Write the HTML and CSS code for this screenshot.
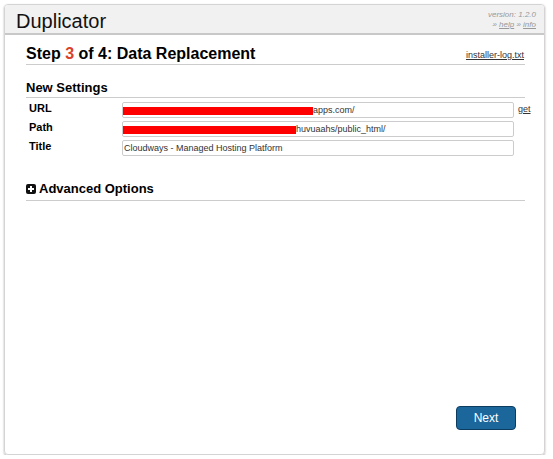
FILE: index.html
```html
<!DOCTYPE html>
<html>
<head>
<meta charset="utf-8">
<link rel="stylesheet" href="styles.css">
</head>
<body>
<div class="box">
  <div class="header">
    <div class="brand">Duplicator</div>
    <div class="version">
      <div>version: 1.2.0</div>
      <div>&raquo; <a href="#">help</a> &raquo; <a href="#">info</a></div>
    </div>
  </div>
  <div class="content">
    <div class="step">
      <div class="step-title">Step <span class="num">3</span> of 4: Data Replacement</div>
      <a class="log" href="#">installer-log.txt</a>
    </div>
    <div class="section">New Settings</div>
    <div class="rows">
      <div class="row">
        <div class="label">URL</div>
        <div class="input"><span class="redact" style="width:190px"></span>apps.com/</div>
        <a class="get" href="#">get</a>
      </div>
      <div class="row">
        <div class="label">Path</div>
        <div class="input"><span class="redact" style="width:173px"></span>huvuaahs/public_html/</div>
      </div>
      <div class="row">
        <div class="label">Title</div>
        <div class="input">Cloudways - Managed Hosting Platform</div>
      </div>
    </div>
    <div class="advanced">
      <span class="plus"><svg width="10" height="10" viewBox="0 0 10 10"><rect x="0" y="0" width="10" height="10" rx="2" fill="#111"/><path d="M5 2v6M2 5h6" stroke="#fff" stroke-width="2"/></svg></span>
      Advanced Options
    </div>
    <div class="spacer"></div>
    <div class="footer">
      <button class="next">Next</button>
    </div>
  </div>
</div>
</body>
</html>
```
FILE: styles.css
```css
html, body {
  margin: 0;
  padding: 0;
  background: #fff;
  font-family: "Liberation Sans", Arial, sans-serif;
  color: #000;
}
.box {
  margin: 4px 0 0 4px;
  width: 539px;
  height: 449px;
  border: 1px solid #d4d4d4;
  border-radius: 4px;
  box-shadow: 0 1px 2px #aaa;
  display: flex;
  flex-direction: column;
  overflow: hidden;
}
.header {
  background: #f1f1f1;
  height: 28px;
  border-bottom: 2px solid #c8c8c8;
  display: flex;
  justify-content: space-between;
  align-items: flex-start;
}
.brand {
  font-size: 20px;
  padding: 4px 0 0 11px;
  line-height: 24px;
  color: #111;
}
.version {
  font-size: 8px;
  font-style: italic;
  color: #999;
  text-align: right;
  padding: 5px 8px 0 0;
  line-height: 10px;
}
.version a { color: #999; }
.content {
  flex: 1;
  padding: 9px 19px 24px 21px;
  display: flex;
  flex-direction: column;
}
.step {
  display: flex;
  justify-content: space-between;
  align-items: flex-end;
  border-bottom: 1px solid #ccc;
  padding-bottom: 1px;
}
.step-title {
  font-size: 16px;
  font-weight: bold;
  line-height: 19px;
}
.num { color: #d9412a; }
.log {
  font-size: 9px;
  color: #333;
  padding-bottom: 3px;
  margin-right: 1px;
}
.section {
  margin-top: 14px;
  font-size: 13px;
  font-weight: bold;
  line-height: 17px;
  border-bottom: 1px solid #ccc;
  padding-bottom: 1px;
}
.rows {
  margin-top: 4px;
  display: flex;
  flex-direction: column;
  gap: 3px;
}
.row {
  display: flex;
  align-items: center;
  height: 16px;
}
.label {
  width: 93px;
  flex-shrink: 0;
  padding-left: 3px;
  font-size: 11px;
  font-weight: bold;
  margin-top: -4px;
}
.input {
  width: 389px;
  flex-shrink: 0;
  height: 14px;
  border: 1px solid #ccc;
  border-radius: 2px;
  font-size: 9px;
  line-height: 14px;
  color: #333;
  display: flex;
  align-items: center;
  padding-left: 1px;
  white-space: nowrap;
  overflow: hidden;
}
.redact {
  display: inline-block;
  flex-shrink: 0;
  height: 8px;
  background: #ff0000;
  margin-left: -1px;
  margin-top: 1px;
}
.get {
  font-size: 9px;
  color: #333;
  margin-left: 4px;
  margin-top: -2px;
}
.advanced {
  margin-top: 24px;
  font-size: 13px;
  font-weight: bold;
  line-height: 17px;
  border-bottom: 1px solid #ccc;
  padding-bottom: 3px;
  display: flex;
  align-items: center;
  gap: 3px;
}
.plus { display: flex; }
.spacer { flex: 1; }
.footer {
  display: flex;
  justify-content: flex-end;
  padding-right: 9px;
}
.next {
  width: 60px;
  height: 24px;
  background: #1b679c;
  border: 1px solid #0c3d61;
  border-radius: 4px;
  color: #fff;
  font-family: "Liberation Sans", Arial, sans-serif;
  font-size: 12px;
  padding: 0;
}
```
